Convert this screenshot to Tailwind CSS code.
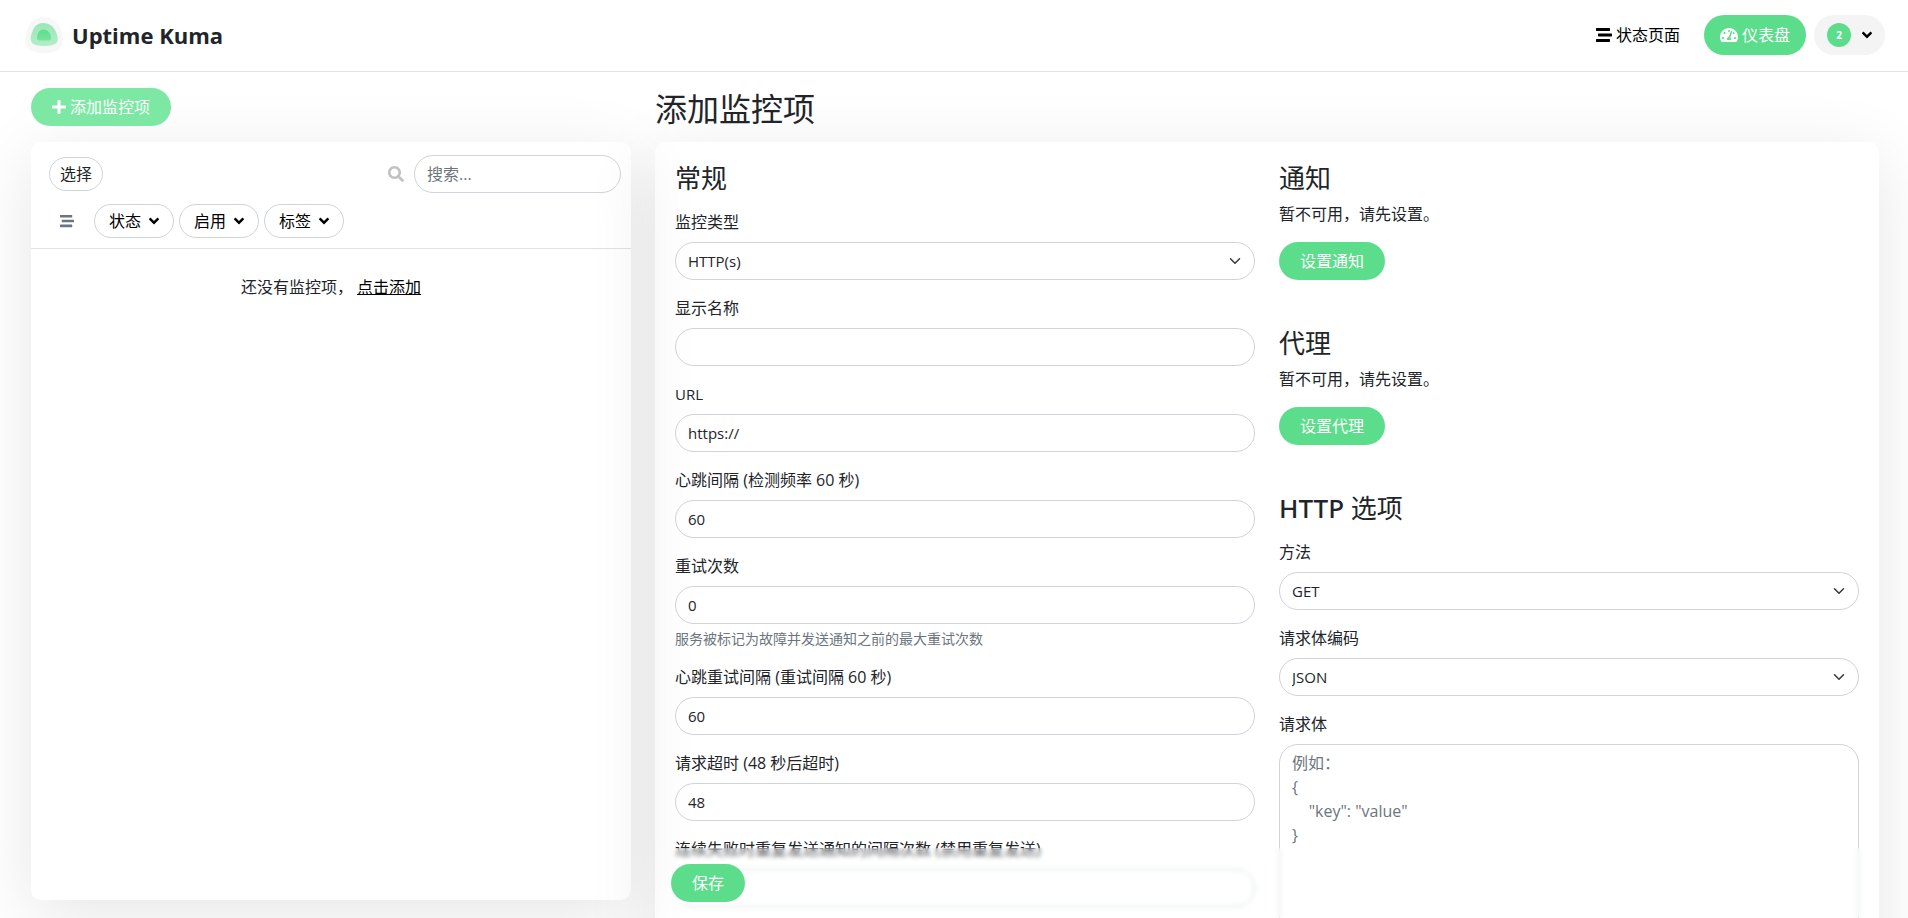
<!DOCTYPE html>
<html lang="zh-CN" class="h-full">
<head>
<meta charset="utf-8">
<meta name="viewport" content="width=device-width, initial-scale=1">
<title>Uptime Kuma</title>
<script src="https://cdn.jsdelivr.net/npm/@tailwindcss/browser@4"></script>
</head>
<body class="h-screen overflow-y-auto overflow-x-hidden [scrollbar-width:none] bg-white text-[#212529] text-base font-['Open_Sans','Noto_Sans_CJK_SC',sans-serif]">

<svg class="hidden" aria-hidden="true">
  <symbol id="stream" viewBox="0 0 512 512"><path d="M16 128h416c8.84 0 16-7.16 16-16V48c0-8.84-7.16-16-16-16H16C7.16 32 0 39.16 0 48v64c0 8.84 7.16 16 16 16zm480 80H80c-8.84 0-16 7.16-16 16v64c0 8.84 7.16 16 16 16h416c8.84 0 16-7.16 16-16v-64c0-8.84-7.16-16-16-16zm-64 176H16c-8.84 0-16 7.16-16 16v64c0 8.84 7.16 16 16 16h416c8.84 0 16-7.16 16-16v-64c0-8.84-7.16-16-16-16z"/></symbol>
  <symbol id="gauge" viewBox="0 0 576 512"><path d="M288 32C128.94 32 0 160.94 0 320c0 52.8 14.25 102.26 39.06 144.8 5.61 9.62 16.3 15.2 27.44 15.2h443c11.14 0 21.83-5.58 27.44-15.2C561.75 422.26 576 372.8 576 320c0-159.06-128.94-288-288-288zm0 64c14.71 0 26.58 10.13 30.32 23.65-1.11 2.26-2.64 4.23-3.45 6.67l-9.22 27.67c-5.13 3.49-10.97 6.01-17.64 6.01-17.67 0-32-14.33-32-32S270.33 96 288 96zM96 384c-17.67 0-32-14.33-32-32s14.33-32 32-32 32 14.33 32 32-14.33 32-32 32zm48-160c-17.67 0-32-14.33-32-32s14.33-32 32-32 32 14.33 32 32-14.33 32-32 32zm246.77-72.41l-61.33 184C343.13 347.33 352 364.54 352 384c0 11.72-3.38 22.55-8.88 32H232.88c-5.5-9.45-8.88-20.28-8.88-32 0-33.94 26.5-61.43 59.9-63.59l61.34-184.01c4.17-12.56 17.73-19.45 30.36-15.17 12.57 4.19 19.35 17.79 15.17 30.36zm14.66 57.2l15.52-46.55c3.47-1.29 7.13-2.23 11.05-2.23 17.67 0 32 14.33 32 32s-14.33 32-32 32c-11.38-.01-20.89-6.28-26.57-15.22zM480 384c-17.67 0-32-14.33-32-32s14.33-32 32-32 32 14.33 32 32-14.33 32-32 32z"/></symbol>
  <symbol id="angle" viewBox="0 0 320 512"><path d="M143 352.3L7 216.3c-9.4-9.4-9.4-24.6 0-33.9l22.6-22.6c9.4-9.4 24.6-9.4 33.9 0l96.4 96.4 96.4-96.4c9.4-9.4 24.6-9.4 33.9 0l22.6 22.6c9.4 9.4 9.4 24.6 0 33.9l-136 136c-9.2 9.4-24.4 9.4-33.8 0z"/></symbol>
  <symbol id="plus" viewBox="0 0 448 512"><path d="M416 208H272V64c0-17.67-14.33-32-32-32h-32c-17.67 0-32 14.33-32 32v144H32c-17.67 0-32 14.33-32 32v32c0 17.67 14.33 32 32 32h144v144c0 17.67 14.33 32 32 32h32c17.67 0 32-14.33 32-32V304h144c17.67 0 32-14.33 32-32v-32c0-17.67-14.33-32-32-32z"/></symbol>
  <symbol id="search-icon" viewBox="0 0 512 512"><path d="M505 442.7L405.3 343c-4.5-4.5-10.6-7-17-7H372c27.6-35.3 44-79.7 44-128C416 93.1 322.9 0 208 0S0 93.1 0 208s93.1 208 208 208c48.3 0 92.7-16.4 128-44v16.3c0 6.4 2.5 12.5 7 17l99.7 99.7c9.4 9.4 24.6 9.4 33.9 0l28.3-28.3c9.4-9.4 9.4-24.6.1-34zM208 336c-70.7 0-128-57.2-128-128 0-70.7 57.2-128 128-128 70.7 0 128 57.2 128 128 0 70.7-57.2 128-128 128z"/></symbol>
  <symbol id="caret" viewBox="0 0 16 16"><path fill="none" stroke="#343a40" stroke-linecap="round" stroke-linejoin="round" stroke-width="2" d="m2 5 6 6 6-6"/></symbol>
</svg>

<header class="flex h-18 items-center justify-between border-b border-[#dee2e6] pl-6 pr-[23px] pb-px">
  <a href="#" class="flex items-center gap-2">
    <svg class="size-10" viewBox="0 0 40 40" aria-hidden="true">
      <defs>
        <linearGradient id="shell" x1="0" y1="0" x2="0" y2="1"><stop offset="0" stop-color="#98e8b5"/><stop offset="1" stop-color="#b4edc9"/></linearGradient>
        <linearGradient id="core" x1="0" y1="0" x2="0" y2="1"><stop offset="0" stop-color="#5cdd8b"/><stop offset="1" stop-color="#78e29e"/></linearGradient>
      </defs>
      <path fill="#f7f7f7" d="M19 2c8 0 14 4 17 11 3 7 4 14 1 19-3 4-8 6-17 6-8 0-14-2-17-6-3-5-2-12 1-19C7 6 12 2 19 2z"/>
      <path fill="url(#shell)" d="M19 8c6 0 10 3 12.500 8 2 5 3.500 9 1 12-2 2-6 3-12.500 3-6 0-10-1-12-3-2-3-1.500-7 .5-12C10.500 11 14 8 19 8z"/>
      <path fill="url(#core)" d="M19.500 14.500c4 0 7.500 3.500 7.500 9 0 1.500-1 2-2.500 2h-9c-1.500 0-2.500-.5-2.500-2 0-5.500 2.500-9 6.500-9z"/>
    </svg>
    <span class="text-[22px] font-bold">Uptime Kuma</span>
  </a>
  <nav class="flex items-center gap-2">
    <a href="#" class="flex items-center gap-1 px-4 text-black"><svg class="size-4 fill-current" aria-hidden="true"><use href="#stream"/></svg>状态页面</a>
    <a href="#" class="flex h-10 items-center gap-1 rounded-full bg-[#5cdd8b] px-4 text-white"><svg class="h-4 w-[18px] fill-current" aria-hidden="true"><use href="#gauge"/></svg>仪表盘</a>
    <button type="button" class="flex h-10 items-center gap-[11px] rounded-full bg-[#f4f4f4] px-[13px]" aria-label="用户菜单"><span class="flex size-6 items-center justify-center rounded-full bg-[#5cdd8b] text-[10px] font-bold text-white">2</span><svg class="h-4 w-[10px] fill-black" aria-hidden="true"><use href="#angle"/></svg></button>
  </nav>
</header>

<main class="ml-[31px] mr-[29px] grid grid-cols-[600fr_1224fr] gap-6 pt-4">
  <section>
    <a href="#" class="inline-flex h-[38px] items-center gap-1 rounded-full bg-[#7ce8a4] px-[21px] text-white"><svg class="h-4 w-[14px] fill-current" aria-hidden="true"><use href="#plus"/></svg>添加监控项</a>
    <div class="mt-4 h-[calc(100vh-160px)] rounded-[10px] shadow-[0_15px_70px_rgba(0,0,0,0.1)]">
      <div class="border-b border-[#dee2e6] pb-[10px] pt-[13px]">
        <div class="flex items-center justify-between pl-[18px] pr-[10px]">
          <button type="button" class="h-[34px] rounded-full border border-[#ced4da] px-[10px]">选择</button>
          <form class="flex items-center gap-[10px]">
            <svg class="size-4 fill-[#c1c1c1]" aria-hidden="true"><use href="#search-icon"/></svg>
            <input type="text" aria-label="搜索" placeholder="搜索..." class="h-[38px] w-[207px] rounded-full border border-[#ced4da] px-3 placeholder:text-[#6c757d]">
          </form>
        </div>
        <div class="mt-[11px] flex items-center gap-[5px] pl-[29px]">
          <button type="button" class="mr-[13px] flex h-[34px] w-4 items-center" aria-label="筛选"><svg class="size-[14px] fill-[#6c757d]" aria-hidden="true"><use href="#stream"/></svg></button>
          <button type="button" class="flex h-[34px] items-center gap-2 rounded-full border border-[#ced4da] px-[14px] text-black">状态<svg class="h-4 w-[10px] fill-current" aria-hidden="true"><use href="#angle"/></svg></button>
          <button type="button" class="flex h-[34px] items-center gap-2 rounded-full border border-[#ced4da] px-[14px] text-black">启用<svg class="h-4 w-[10px] fill-current" aria-hidden="true"><use href="#angle"/></svg></button>
          <button type="button" class="flex h-[34px] items-center gap-2 rounded-full border border-[#ced4da] px-[14px] text-black">标签<svg class="h-4 w-[10px] fill-current" aria-hidden="true"><use href="#angle"/></svg></button>
        </div>
      </div>
      <p class="mt-[26px] text-center">还没有监控项， <a href="#" class="text-black underline">点击添加</a></p>
    </div>
  </section>

  <section>
    <h1 class="text-[32px] leading-[42px]">添加监控项</h1>
    <form class="mt-3 rounded-[10px] px-5 pt-5 shadow-[0_15px_70px_rgba(0,0,0,0.1)]">
      <div class="grid grid-cols-2 gap-6 pb-4">
        <div class="flex flex-col gap-4">
          <h2 class="text-[26px] leading-8">常规</h2>
          <div class="flex flex-col gap-2">
            <label for="type">监控类型</label>
            <div class="grid items-center">
              <select id="type" class="col-start-1 row-start-1 h-[38px] appearance-none rounded-full border border-[#ced4da] px-3 text-[15px]"><option>HTTP(s)</option></select>
              <svg class="pointer-events-none col-start-1 row-start-1 mr-3 h-3 w-4 justify-self-end" aria-hidden="true"><use href="#caret"/></svg>
            </div>
          </div>
          <div class="flex flex-col gap-2">
            <label for="name">显示名称</label>
            <input id="name" type="text" class="h-[38px] rounded-full border border-[#ced4da] px-3 text-[15px]">
          </div>
          <div class="flex flex-col gap-2">
            <label for="url" class="text-[15px] leading-6">URL</label>
            <input id="url" type="text" value="https://" class="h-[38px] rounded-full border border-[#ced4da] px-3 text-[15px]">
          </div>
          <div class="flex flex-col gap-2">
            <label for="interval">心跳间隔 (检测频率 60 秒)</label>
            <input id="interval" type="text" inputmode="numeric" value="60" class="h-[38px] rounded-full border border-[#ced4da] px-3 text-[15px]">
          </div>
          <div class="flex flex-col gap-2">
            <label for="retries">重试次数</label>
            <div>
              <input id="retries" type="text" inputmode="numeric" value="0" class="h-[38px] w-full rounded-full border border-[#ced4da] px-3 text-[15px]">
              <p class="mt-1 text-sm leading-[21px] text-[#6c757d]">服务被标记为故障并发送通知之前的最大重试次数</p>
            </div>
          </div>
          <div class="flex flex-col gap-2">
            <label for="retry-interval">心跳重试间隔 (重试间隔 60 秒)</label>
            <input id="retry-interval" type="text" inputmode="numeric" value="60" class="h-[38px] rounded-full border border-[#ced4da] px-3 text-[15px]">
          </div>
          <div class="flex flex-col gap-2">
            <label for="timeout">请求超时 (48 秒后超时)</label>
            <input id="timeout" type="text" inputmode="numeric" value="48" class="h-[38px] rounded-full border border-[#ced4da] px-3 text-[15px]">
          </div>
          <div class="flex flex-col gap-2">
            <label for="resend">连续失败时重复发送通知的间隔次数 (禁用重复发送)</label>
            <input id="resend" type="text" inputmode="numeric" class="h-[38px] rounded-full border border-[#ced4da] px-3 text-[15px]">
          </div>
        </div>

        <div class="flex flex-col gap-[47px]">
          <div class="flex flex-col items-start">
            <h2 class="text-[26px] leading-8">通知</h2>
            <p class="mt-2">暂不可用，请先设置。</p>
            <button type="button" class="mt-4 h-[38px] rounded-full bg-[#5cdd8b] px-[21px] text-white">设置通知</button>
          </div>
          <div class="flex flex-col items-start">
            <h2 class="text-[26px] leading-8">代理</h2>
            <p class="mt-2">暂不可用，请先设置。</p>
            <button type="button" class="mt-4 h-[38px] rounded-full bg-[#5cdd8b] px-[21px] text-white">设置代理</button>
          </div>
          <div class="flex flex-col gap-4">
            <h2 class="text-[26px] leading-8"><span class="font-['Noto_Sans',sans-serif] font-medium">HTTP</span> 选项</h2>
            <div class="flex flex-col gap-2">
              <label for="method">方法</label>
              <div class="grid items-center">
                <select id="method" class="col-start-1 row-start-1 h-[38px] appearance-none rounded-full border border-[#ced4da] px-3 text-[15px]"><option>GET</option></select>
                <svg class="pointer-events-none col-start-1 row-start-1 mr-3 h-3 w-4 justify-self-end" aria-hidden="true"><use href="#caret"/></svg>
              </div>
            </div>
            <div class="flex flex-col gap-2">
              <label for="encoding">请求体编码</label>
              <div class="grid items-center">
                <select id="encoding" class="col-start-1 row-start-1 h-[38px] appearance-none rounded-full border border-[#ced4da] px-3 text-[15px]"><option>JSON</option></select>
                <svg class="pointer-events-none col-start-1 row-start-1 mr-3 h-3 w-4 justify-self-end" aria-hidden="true"><use href="#caret"/></svg>
              </div>
            </div>
            <div class="flex flex-col gap-2">
              <label for="body">请求体</label>
              <textarea id="body" class="h-[200px] resize-none rounded-[19px] border border-[#ced4da] px-3 py-[6px] leading-6 placeholder:text-[#6c757d]" placeholder="例如：
{
    &quot;key&quot;: &quot;value&quot;
}"></textarea>
            </div>
          </div>
        </div>
      </div>
      <div class="sticky bottom-0 -mx-5 bg-white/20 p-4 backdrop-blur-[2px]">
        <button type="submit" class="h-[38px] rounded-full bg-[#5cdd8b] px-[21px] text-white">保存</button>
      </div>
    </form>
  </section>
</main>
</body>
</html>
